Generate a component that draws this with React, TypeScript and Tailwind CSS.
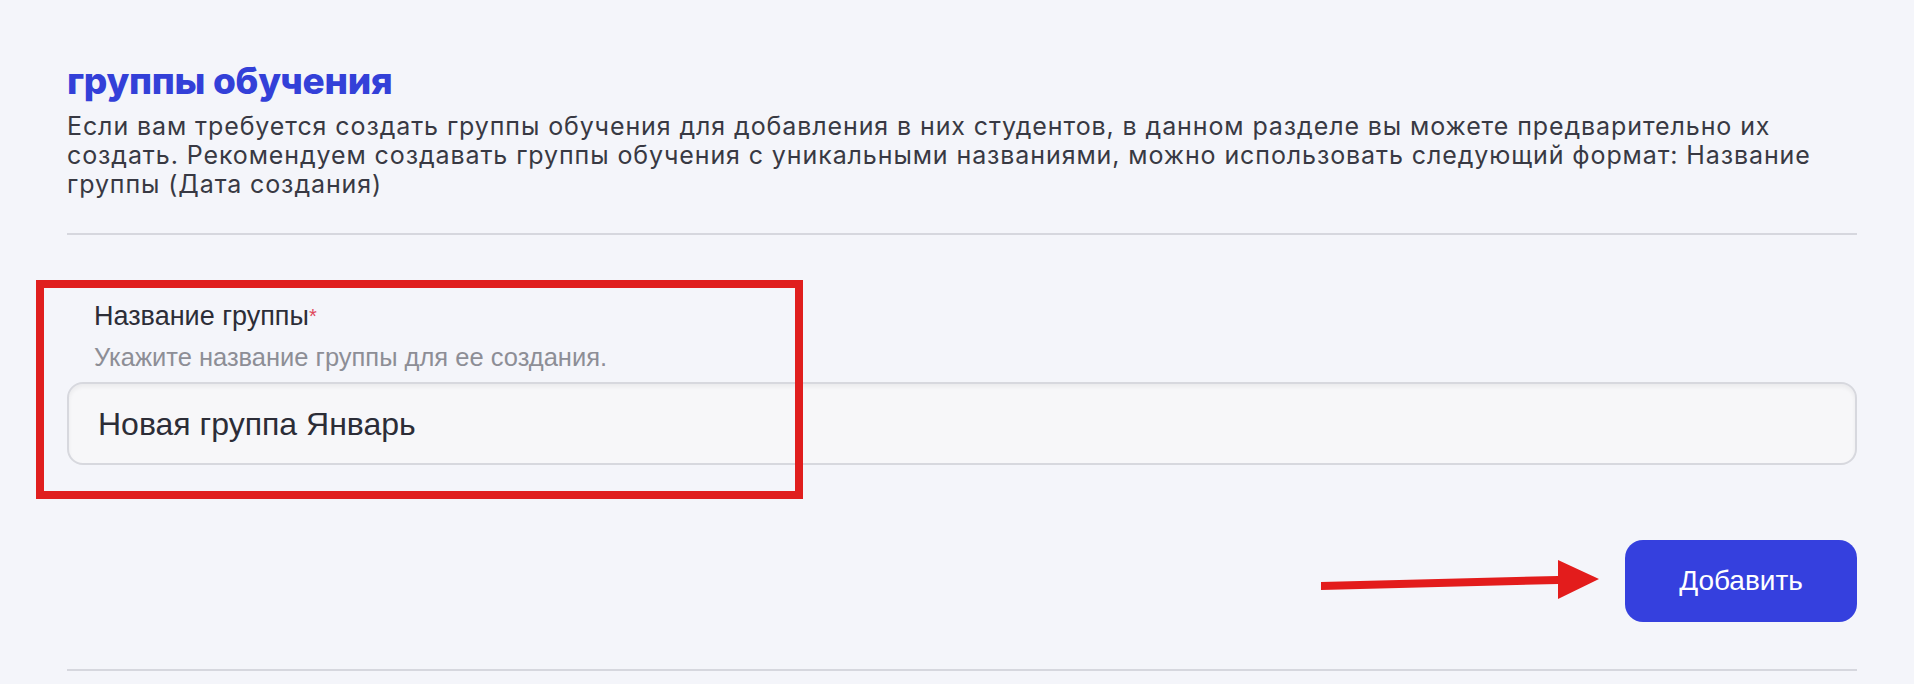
export default function App() {
  return (
    <div className="relative w-[1914px] h-[684px] overflow-hidden bg-[#f4f5fa] font-['Inter',sans-serif]">
      <div className="pl-[67px] pr-[57px] pt-[61px]">
        <h1 className="text-[37px] leading-[40px] font-extrabold tracking-[-0.3px] text-[#3340d8]">группы обучения</h1>
        <p className="mt-[11px] text-[25px] leading-[29px] tracking-[0.9px] text-[#383943]">
          Если вам требуется создать группы обучения для добавления в них студентов, в данном разделе вы можете предварительно их
          создать. Рекомендуем создавать группы обучения с уникальными названиями, можно использовать следующий формат: Название
          группы (Дата создания)
        </p>
        <div className="mt-[34px] h-[2px] bg-[#d6d7de]" />

        <div className="font-['Liberation_Sans',Arial,sans-serif]">
          <div className="mt-[66px] pl-[27px] text-[27px] leading-[30px] text-[#2c2d37]">
            Название группы<span className="text-[#e0475a] text-[20px] align-top">*</span>
          </div>
          <div className="mt-[11px] pl-[27px] text-[25.5px] leading-[30px] text-[#8d8e96]">
            Укажите название группы для ее создания.
          </div>
          <div className="mt-[10px] flex h-[83px] items-center rounded-[16px] border-2 border-[#d7d8de] bg-[#f7f7f9] pl-[29px] text-[32px] text-[#2c2d37] shadow-[inset_0_3px_4px_rgba(0,0,0,0.05)]">
            Новая группа Январь
          </div>
          <div className="mt-[75px] flex justify-end">
            <button className="h-[82px] w-[232px] rounded-[18px] bg-[#3540de] text-[28px] text-white">Добавить</button>
          </div>
        </div>
        <div className="mt-[47px] h-[2px] bg-[#d6d7de]" />
      </div>

      <div className="absolute left-[36px] top-[280px] h-[219px] w-[767px] border-[8px] border-[#e01e1e]" />
      <svg className="absolute left-0 top-0" width="1914" height="684" viewBox="0 0 1914 684">
        <polygon points="1321,582 1558,576 1558,560 1599,579 1558,599 1558,584 1321,590" fill="#e31c1c" />
      </svg>
    </div>
  );
}
